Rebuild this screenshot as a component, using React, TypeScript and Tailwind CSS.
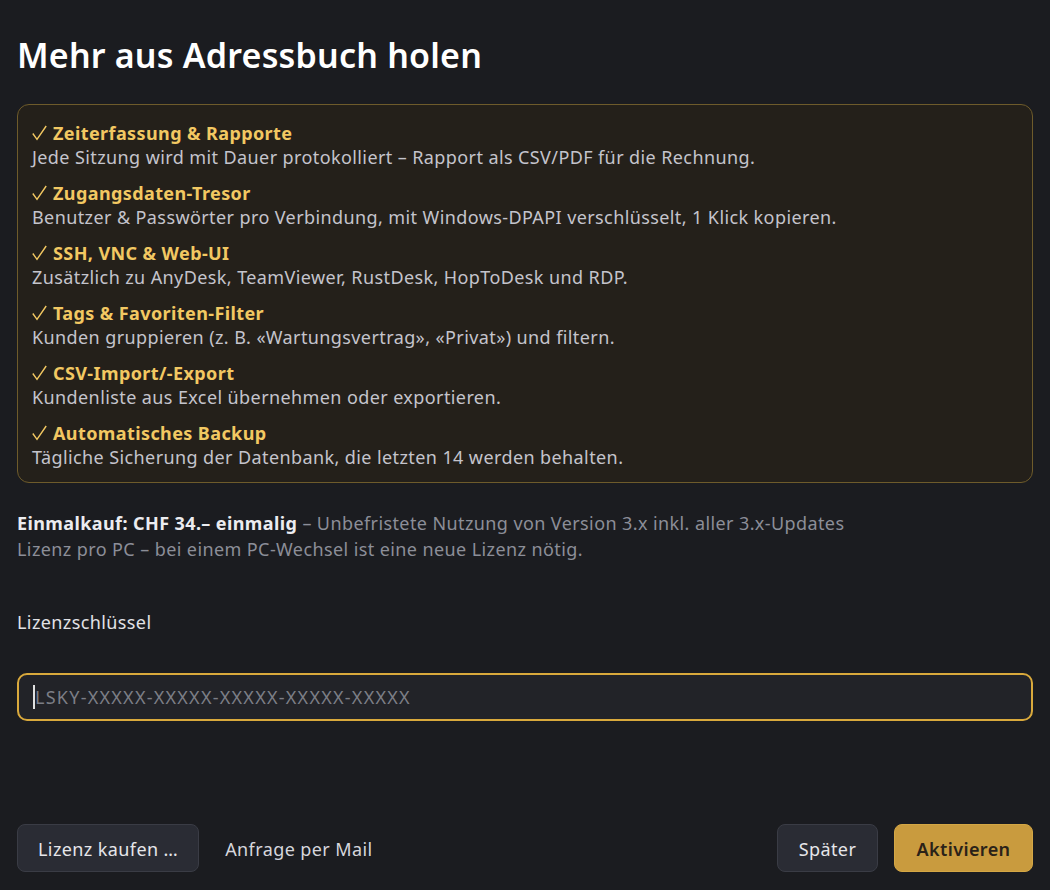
import * as React from "react"

interface Feature {
    title: string
    text: string
}

const features: Feature[] = [
    { title: "Zeiterfassung & Rapporte", text: "Jede Sitzung wird mit Dauer protokolliert – Rapport als CSV/PDF für die Rechnung." },
    { title: "Zugangsdaten-Tresor", text: "Benutzer & Passwörter pro Verbindung, mit Windows-DPAPI verschlüsselt, 1 Klick kopieren." },
    { title: "SSH, VNC & Web-UI", text: "Zusätzlich zu AnyDesk, TeamViewer, RustDesk, HopToDesk und RDP." },
    { title: "Tags & Favoriten-Filter", text: "Kunden gruppieren (z. B. «Wartungsvertrag», «Privat») und filtern." },
    { title: "CSV-Import/-Export", text: "Kundenliste aus Excel übernehmen oder exportieren." },
    { title: "Automatisches Backup", text: "Tägliche Sicherung der Datenbank, die letzten 14 werden behalten." },
]

function Check() {
    return (
        <svg width="15" height="16" viewBox="0 0 15 16" className="mr-[6px] shrink-0" aria-hidden>
            <polyline points="0.8,8.5 5,14.3 14.2,1" fill="none" stroke="#f2c862" strokeWidth="1.4" strokeLinejoin="miter" />
        </svg>
    )
}

export default function App() {
    return (
        <div
            className="flex h-[890px] w-[1050px] flex-col bg-[#1b1c20] px-[17px] text-[18px] tracking-[0.4px] text-[#e6e6ea]"
            style={{ fontFamily: '"Noto Sans", "Open Sans", sans-serif' }}
        >
            <h1 className="mt-[33px] text-[34px] font-semibold leading-[44px] tracking-[0.2px] text-white">Mehr aus Adressbuch holen</h1>

            <div className="mt-[27px] flex flex-col gap-[12px] rounded-[12px] border border-[#6e5b2b] bg-[#24201a] px-[14px] pb-[13px] pt-[16px]">
                {features.map((f) => (
                    <div key={f.title} className="flex flex-col">
                        <div className="flex h-[24px] items-center leading-[24px] text-[#f2c862]">
                            <Check />
                            <span className="font-bold">{f.title}</span>
                        </div>
                        <div className="leading-[24px] text-[#c4c4cc]">{f.text}</div>
                    </div>
                ))}
            </div>

            <div className="mt-[27px] leading-[26px] text-[#8c8e98]">
                <p>
                    <span className="font-bold text-[#ececf0]">Einmalkauf: CHF 34.– einmalig</span> – Unbefristete Nutzung von Version 3.x inkl. aller 3.x-Updates
                </p>
                <p>Lizenz pro PC – bei einem PC-Wechsel ist eine neue Lizenz nötig.</p>
            </div>

            <label className="mt-[47px] leading-[26px] text-[#e2e2e6]">Lizenzschlüssel</label>

            <div className="mt-[38px] flex h-[48px] items-center rounded-[10px] border-2 border-[#d9a93c] bg-[#222328] px-[14px]">
                <span className="h-[24px] w-[2px] bg-[#e0e0e0]" />
                <span className="tracking-[1.25px] text-[#7c7e86]">LSKY-XXXXX-XXXXX-XXXXX-XXXXX-XXXXX</span>
            </div>

            <div className="mt-auto mb-[18px] flex items-center">
                <button className="h-[48px] rounded-[8px] border border-[#3a3c45] bg-[#2a2c34] px-[20px] pt-[3px] text-[#e6e6ea]">
                    Lizenz kaufen …
                </button>
                <span className="ml-[26px] pt-[3px] text-[#d6d6dc]">Anfrage per Mail</span>
                <div className="ml-auto flex gap-[16px]">
                    <button className="h-[48px] w-[101px] rounded-[8px] border border-[#3a3c45] bg-[#2a2c34] pt-[3px] text-[#e6e6ea]">
                        Später
                    </button>
                    <button className="h-[48px] w-[139px] rounded-[8px] border border-[#d4a745] bg-[#c99b3e] pt-[3px] font-semibold text-[#2a2218]">
                        Aktivieren
                    </button>
                </div>
            </div>
        </div>
    )
}
